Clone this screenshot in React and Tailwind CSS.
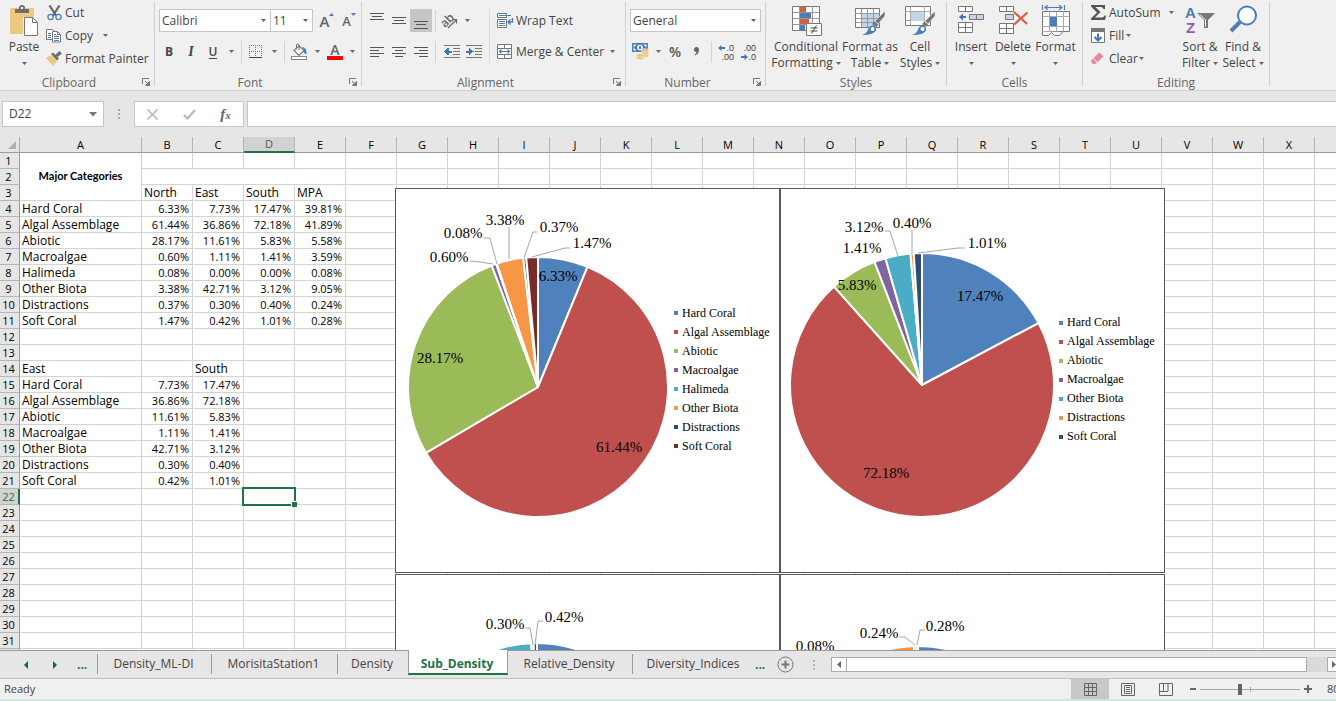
import { useState } from 'react';

const CHART_COLORS = ['#4f81bd', '#c0504d', '#9bbb59', '#8064a2', '#4bacc6', '#f79646', '#2c4d75', '#772c2a'];

const COLUMNS = 'ABCDEFGHIJKLMNOPQRSTUVWXY'.split('');
const ROWS = Array.from({ length: 32 }, (_, i) => i + 1);

const CELLS = {
    3: { B: 'North', C: 'East', D: 'South', E: 'MPA' },
    4: { A: 'Hard Coral', B: '6.33%', C: '7.73%', D: '17.47%', E: '39.81%' },
    5: { A: 'Algal Assemblage', B: '61.44%', C: '36.86%', D: '72.18%', E: '41.89%' },
    6: { A: 'Abiotic', B: '28.17%', C: '11.61%', D: '5.83%', E: '5.58%' },
    7: { A: 'Macroalgae', B: '0.60%', C: '1.11%', D: '1.41%', E: '3.59%' },
    8: { A: 'Halimeda', B: '0.08%', C: '0.00%', D: '0.00%', E: '0.08%' },
    9: { A: 'Other Biota', B: '3.38%', C: '42.71%', D: '3.12%', E: '9.05%' },
    10: { A: 'Distractions', B: '0.37%', C: '0.30%', D: '0.40%', E: '0.24%' },
    11: { A: 'Soft Coral', B: '1.47%', C: '0.42%', D: '1.01%', E: '0.28%' },
    14: { A: 'East', C: 'South' },
    15: { A: 'Hard Coral', B: '7.73%', C: '17.47%' },
    16: { A: 'Algal Assemblage', B: '36.86%', C: '72.18%' },
    17: { A: 'Abiotic', B: '11.61%', C: '5.83%' },
    18: { A: 'Macroalgae', B: '1.11%', C: '1.41%' },
    19: { A: 'Other Biota', B: '42.71%', C: '3.12%' },
    20: { A: 'Distractions', B: '0.30%', C: '0.40%' },
    21: { A: 'Soft Coral', B: '0.42%', C: '1.01%' },
};

const ALL = ['Hard Coral', 'Algal Assemblage', 'Abiotic', 'Macroalgae', 'Halimeda', 'Other Biota', 'Distractions', 'Soft Coral'];
const NO_HALIMEDA = ALL.filter((name) => name !== 'Halimeda');

const CHARTS = [
    {
        title: 'North',
        names: ALL,
        values: [6.33, 61.44, 28.17, 0.6, 0.08, 3.38, 0.37, 1.47],
        cx: 143, cy: 199, r: 130,
        labels: [
            ['6.33%', 163, 93], ['61.44%', 224, 264], ['28.17%', 45, 175], ['0.60%', 54, 74],
            ['0.08%', 68, 50], ['3.38%', 110, 37], ['0.37%', 164, 44], ['1.47%', 197, 60],
        ],
        leaders: ['75,73 85,74 98,76', '89,50 95,50 102,76', '114,39 114,71', '142,44 138,44 129,70', '175,60 170,60 137,69'],
    },
    {
        title: 'South',
        names: NO_HALIMEDA,
        values: [17.47, 72.18, 5.83, 1.41, 3.12, 0.4, 1.01],
        cx: 142, cy: 197, r: 132,
        labels: [
            ['17.47%', 200, 113], ['72.18%', 106, 290], ['5.83%', 77, 102], ['1.41%', 82, 65],
            ['3.12%', 84, 44], ['0.40%', 132, 40], ['1.01%', 207, 60],
        ],
        leaders: ['105,43 110,43 118,68', '132,42 132,66', '185,60 178,60 138,65'],
    },
    {
        title: 'East',
        names: NO_HALIMEDA,
        values: [7.73, 36.86, 11.61, 1.11, 42.71, 0.3, 0.42],
        cx: 142, cy: 195, r: 126,
        labels: [['0.30%', 110, 55], ['0.42%', 169, 48]],
        leaders: ['130,54 135,54 138,71', '148,47 143,47 140,71'],
    },
    {
        title: 'MPA',
        names: ALL,
        values: [39.81, 41.89, 5.58, 3.59, 0.08, 9.05, 0.24, 0.28],
        cx: 138, cy: 198, r: 126,
        labels: [['0.08%', 35, 77], ['0.24%', 99, 64], ['0.28%', 165, 57]],
        leaders: ['120,63 125,63 135,71', '145,56 140,56 137,71'],
    },
];

function slicePath(cx, cy, r, from, to) {
    const a = from * 2 * Math.PI;
    const b = to * 2 * Math.PI;
    const large = to - from > 0.5 ? 1 : 0;
    return `M${cx} ${cy}L${cx + r * Math.sin(a)} ${cy - r * Math.cos(a)}A${r} ${r} 0 ${large} 1 ${cx + r * Math.sin(b)} ${cy - r * Math.cos(b)}Z`;
}

function PieChart({ chart }) {
    const total = chart.values.reduce((sum, v) => sum + v, 0);
    let sum = 0;
    const slices = chart.values.map((v, i) => {
        const from = sum / total;
        sum += v;
        return { d: slicePath(chart.cx, chart.cy, chart.r, from, sum / total), color: CHART_COLORS[i] };
    });

    return (
        <figure className="flex h-[385px] items-center border border-[#595959] bg-white font-['Liberation_Serif',serif] text-black" aria-label={chart.title}>
            <svg viewBox="1 1 278 383" className="h-[383px] w-[278px] shrink-0">
                {slices.map((s, i) => (
                    <path key={i} d={s.d} fill={s.color} stroke="#fff" strokeWidth="2" strokeLinejoin="round" />
                ))}
                {chart.leaders.map((points) => (
                    <polyline key={points} points={points} fill="none" stroke="#a6a6a6" />
                ))}
                {chart.labels.map(([text, x, y]) => (
                    <text key={text} x={x} y={y} fontSize="15" textAnchor="middle">{text}</text>
                ))}
            </svg>
            <ul className="pb-0.5 text-[12px] leading-[19px] whitespace-nowrap">
                {chart.names.map((name, i) => (
                    <li key={name} className="flex items-center gap-1">
                        <svg className="size-1" viewBox="0 0 4 4"><rect width="4" height="4" fill={CHART_COLORS[i]} /></svg>
                        {name}
                    </li>
                ))}
            </ul>
        </figure>
    );
}

/* ---------- small building blocks ---------- */

function Caret() {
    return (
        <svg className="h-[3px] w-[5px] shrink-0" viewBox="0 0 5 3"><path d="M0 0h5L2.5 3z" fill="#666" /></svg>
    );
}

function CaretButton({ label, className = 'w-3.5' }) {
    return (
        <button aria-label={label} className={`flex h-[22px] shrink-0 items-center justify-center ${className}`}><Caret /></button>
    );
}

function IconButton({ label, active, children }) {
    return (
        <button aria-label={label} className={`flex h-[23px] w-[22px] shrink-0 items-center justify-center ${active ? 'bg-[#c6c6c6]' : ''}`}>
            {children}
        </button>
    );
}

function Sep() {
    return <div className="mx-[3px] h-[22px] w-px shrink-0 bg-[#d4d4d4]" />;
}

function Group({ label, launcher, className, children }) {
    return (
        <section className={`flex shrink-0 ${className}`}>
            <div className="flex flex-1 flex-col">
                <div className="flex h-[74px]">{children}</div>
                <div className="flex h-4 items-center pt-px text-[#666]">
                    <span className={`flex-1 text-center ${launcher ? 'pr-1' : ''}`}>{label}</span>
                    {launcher && (
                        <button aria-label={`${label} settings`} className="mr-[3px]">
                            <svg width="9" height="9" viewBox="0 0 9 9" fill="none" stroke="#777">
                                <path d="M.5 6V.5H7M3 3l3 3" />
                                <path d="M7.5 3v4.500H3z" fill="#777" stroke="none" />
                                <path d="M7.500 3.500v4H3.500" />
                            </svg>
                        </button>
                    )}
                </div>
            </div>
            <div className="mt-0.5 h-[84px] w-px bg-[#d0d0d0]" />
        </section>
    );
}

function RowButton({ icon, text, caret, caretGap = 'ml-1' }) {
    return (
        <button className="flex h-[23px] items-center whitespace-nowrap">
            <span className="mr-[3px] flex w-4 justify-center">{icon}</span>
            {text}
            {caret && <span className={caretGap}><Caret /></span>}
        </button>
    );
}

function BigButton({ icon, lines, className }) {
    return (
        <button className={`flex flex-col items-center whitespace-nowrap leading-4 ${className}`}>
            <span className="mt-[5px] flex h-[34px] items-start">{icon}</span>
            <span>{lines[0]}</span>
            <span className="flex h-4 items-center gap-[3px]">{lines[1]}<Caret /></span>
        </button>
    );
}

function Combo({ label, value, className }) {
    return (
        <span className={`relative flex h-[23px] items-center border border-[#c6c6c6] bg-white ${className}`}>
            <select aria-label={label} defaultValue={value} className="h-full w-full appearance-none pl-0.5 text-[12px] text-[#444] outline-none">
                <option>{value}</option>
            </select>
            <span className="pointer-events-none absolute right-1 flex"><Caret /></span>
        </span>
    );
}

/* ---------- icons ---------- */

const PasteIcon = (
    <svg width="30" height="32" viewBox="0 0 30 32">
        <rect x="1" y="3" width="24" height="26" rx="1" fill="#edc87e" />
        <path d="M6 4h4V3a3 3 0 0 1 6 0v1h4v4H6z" fill="#6d6d6d" />
        <rect x="12" y="2" width="2" height="2" fill="#fff" />
        <path d="M14 12h11l5 5v15H14z" fill="#f0f0f0" />
        <path d="M15.500 12.500h8l5 5v13h-13z" fill="#fff" stroke="#777" />
        <path d="M23.500 12.500v5h5" fill="none" stroke="#777" />
    </svg>
);

const CutIcon = (
    <svg width="15" height="16" viewBox="0 0 15 16" fill="none">
        <path d="M2.500 0.500l6.500 10M12.500 0.500L6 10.500" stroke="#666" strokeWidth="2.200" />
        <circle cx="3.500" cy="12" r="2.600" stroke="#4a7ebb" strokeWidth="1.300" />
        <circle cx="11.500" cy="12" r="2.600" stroke="#4a7ebb" strokeWidth="1.300" />
    </svg>
);

const CopyIcon = (
    <svg width="16" height="15" viewBox="0 0 16 15">
        <path d="M.5 1.500h6l2 2v8h-8z" fill="#fff" stroke="#777" />
        <path d="M2 5.500h3M2 7.500h3M2 9.500h3" stroke="#4a7ebb" />
        <path d="M6.500 3.500h5l3 3v7.500h-8z" fill="#fff" stroke="#777" />
        <path d="M11.500 3.500v3h3" fill="none" stroke="#777" />
        <path d="M8 8.500h5M8 10.500h5M8 12.500h5M8 6.500h2" stroke="#4a7ebb" />
    </svg>
);

const PainterIcon = (
    <svg width="16" height="15" viewBox="0 0 16 15">
        <path d="M0 7l5-3 6 6-4 5z" fill="#edc87e" />
        <path d="M5 3l2-1.500 6 6-2 2z" fill="#6d6d6d" />
        <path d="M9 4l4.500-4L16 2.500 11.500 6z" fill="#6d6d6d" />
    </svg>
);

const BordersIcon = (
    <svg width="14" height="14" viewBox="0 0 14 14" stroke="#777" strokeDasharray="1 1" shapeRendering="crispEdges">
        <path d="M0 .5h13M0 6.500h13M.5 0v13M6.500 0v13M12.500 0v13" fill="none" />
        <path d="M0 12.500h13" stroke="#444" strokeDasharray="none" />
    </svg>
);

const FillColorIcon = (
    <svg width="17" height="17" viewBox="0 0 17 17">
        <path d="M3 7.500L8 3l5 4.500-5 5z" fill="#fff" stroke="#777" strokeWidth="1.200" />
        <path d="M5.500 5V1.500Q7 .2 8 1.500V7" fill="none" stroke="#777" />
        <path d="M11 4q5 0 4.500 7.500L12.500 9.500q1-3-1.500-5.500z" fill="#4a7ebb" />
        <rect x=".5" y="13.500" width="15" height="3" fill="#fff" stroke="#888" />
    </svg>
);

function AlignIcon({ lines, width = 14, height = 14 }) {
    return (
        <svg width={width} height={height} viewBox={`0 0 ${width} ${height}`} shapeRendering="crispEdges">
            {lines.map(([x, y, w]) => <rect key={y} x={x} y={y} width={w} height="1" fill="#555" />)}
        </svg>
    );
}

const OrientationIcon = (
    <svg width="18" height="16" viewBox="0 0 18 16" className="overflow-visible">
        <text x="0" y="12" fontSize="12" fontWeight="600" fill="#666" transform="rotate(-45 6 9)">ab</text>
        <path d="M7 15l8-8M11.500 6.500H15.500V10.500" stroke="#666" fill="none" strokeWidth="1.200" />
    </svg>
);

function IndentIcon({ right }) {
    return (
        <svg width="16" height="14" viewBox="0 0 16 14" shapeRendering="crispEdges">
            <path d="M0 .5h16M9 3.500h7M9 6.500h7M9 9.500h7M0 12.500h16" stroke="#777" />
            {right
                ? <path d="M0 5.500h3v-3l4.500 4-4.500 4v-3H0z" fill="#3f76b5" />
                : <path d="M7.500 5.500h-3v-3L0 6.500l4.500 4v-3h3z" fill="#3f76b5" />}
        </svg>
    );
}

const WrapIcon = (
    <svg width="17" height="16" viewBox="0 0 17 16" className="shrink-0">
        <path d="M.5.5h9v4h-9z M.5 6.500h9v8h-9z" fill="#fff" stroke="#777" />
        <path d="M2 2.500h12M2 8.500h6M2 10.500h6M2 12.500h6" stroke="#4a7ebb" />
        <path d="M15.500 5v4h-4M13.500 6.500L11 9l2.500 2.500" fill="none" stroke="#4a7ebb" strokeWidth="1.400" />
    </svg>
);

const MergeIcon = (
    <svg width="16" height="16" viewBox="0 0 16 16" fill="none">
        <path d="M.5.5h14v14H.5zM.5 4.500h14M.5 10.500h14M7.500 .5v4M7.500 10.500v4" stroke="#777" fill="#fff" />
        <path d="M2 7.500h11M4.500 5.500L2.500 7.500l2 2M10.500 5.500l2 2-2 2" stroke="#4a7ebb" strokeWidth="1.200" />
    </svg>
);

const CurrencyIcon = (
    <svg width="18" height="17" viewBox="0 0 18 17">
        <rect x="0" y="0" width="16" height="9" fill="#4a7ebb" />
        <path d="M1.500 1.500h3l-3 3zM14.500 1.500h-3l3 3zM1.500 7.500h3l-3-3z" fill="#fff" />
        <circle cx="8" cy="4.500" r="2.800" fill="#fff" />
        <path d="M7 3h2v3H7z" fill="#4a7ebb" />
        <g fill="#edc07a" stroke="#f0f0f0" strokeWidth=".6">
            <ellipse cx="13" cy="12.500" rx="3.800" ry="1.800" />
            <ellipse cx="13" cy="10" rx="3.800" ry="1.800" />
            <ellipse cx="13" cy="7.500" rx="3.800" ry="1.800" />
            <ellipse cx="8" cy="15" rx="3.800" ry="1.800" />
            <ellipse cx="8" cy="12.500" rx="3.800" ry="1.800" />
        </g>
    </svg>
);

function DecimalIcon({ increase }) {
    return (
        <svg width="18" height="18" viewBox="0 0 18 18" fontSize="9" fill="#444" className="shrink-0 overflow-visible font-['Liberation_Sans',sans-serif]">
            <text x="17" y="8" textAnchor="end">{increase ? '.0' : '.00'}</text>
            <text x="17" y="17" textAnchor="end">{increase ? '.00' : '.0'}</text>
            {increase
                ? <path d="M1 5L4.500 2v2H8v2H4.500v2z" fill="#3f76b5" />
                : <path d="M9 14L5.500 11v2H2v2h3.500v2z" fill="#3f76b5" />}
        </svg>
    );
}

const ConditionalIcon = (
    <svg width="31" height="31" viewBox="0 0 31 31">
        <path d="M1.500 1.500h27v24h-27z" fill="#fff" stroke="#777" />
        <path d="M1.500 7.500h27M1.500 13.500h27M1.500 19.500h27M8.500 1.500v24M21.500 1.500v24" stroke="#999" />
        <path d="M9 2h6v5H9zM9 14h9v5H9z" fill="#d65f3d" />
        <path d="M9 8h11v5H9zM9 20h5v5H9z" fill="#4a7ebb" />
        <path d="M15.500 18.500h15v12h-15z" fill="#fff" stroke="#777" />
        <path d="M19.500 23h7M19.500 26h7M25.500 20.500l-5 8" stroke="#444" fill="none" />
    </svg>
);

const Brush = (
    <>
        <path d="M31 6v5l-7 8-3-3z" fill="#777" stroke="#f0f0f0" strokeWidth=".6" />
        <path d="M20.500 16.500l3.500 3-2 2.500-4-3z" fill="#777" />
        <path d="M8 30q5-2 6-5.500 1-4 5-4 3.500 1 3 4.500-1 5-14 5z" fill="#4a7ebb" />
        <circle cx="18.500" cy="24" r="2" fill="#fff" />
    </>
);

const TableStyleIcon = (
    <svg width="32" height="31" viewBox="0 0 32 31">
        <path d="M1.500 3.500h24v19h-24z" fill="#fff" stroke="#777" />
        <path d="M8 9h17v13H8z" fill="#c3d5ea" />
        <path d="M1.500 8.500h24M1.500 13.500h24M1.500 17.500h24M7.500 3.500v19M13.500 3.500v19M19.500 3.500v19" stroke="#999" />
        {Brush}
    </svg>
);

const CellStyleIcon = (
    <svg width="32" height="31" viewBox="0 0 32 31">
        <path d="M1.500 1.500h25v19h-25z" fill="#fff" stroke="#777" />
        <path d="M1.500 6.500h25M1.500 15.500h25M6.500 1.500v19M20.500 1.500v19" stroke="#aaa" />
        <path d="M7 7h13v9H7z" fill="#c3d5ea" />
        {Brush}
    </svg>
);

const InsertIcon = (
    <svg width="28" height="30" viewBox="0 0 28 30" stroke="#777">
        <path d="M1.500 1.500h14v5h-14zM8.500 1.500v5M1.500 17.500h14v10h-14zM1.500 22.500h14M8.500 17.500v10" fill="#fff" />
        <path d="M12.500 9.500h14v5h-14zM19.500 9.500v5" fill="#c3d5ea" />
        <path d="M2 12L6 8.500v2.500h3v2H6v2.500z" fill="#3f76b5" stroke="none" />
    </svg>
);

const DeleteIcon = (
    <svg width="31" height="30" viewBox="0 0 31 30" stroke="#777">
        <path d="M1.500 1.500h14v5h-14zM8.500 1.500v5M1.500 18.500h14v10h-14zM1.500 23.500h14M8.500 18.500v10" fill="#fff" />
        <path d="M7.500 9.500h8v5h-8z" fill="#c3d5ea" />
        <path d="M16 7l13 12M29.500 7.500L16 19.500" stroke="#d65f3d" strokeWidth="2.200" />
    </svg>
);

const FormatIcon = (
    <svg width="29" height="31" viewBox="0 0 29 31" fill="none">
        <path d="M1.500 0v5M23.500 0v5M4 2.500h17M7 0L4 2.500 7 5M18 0l3 2.500L18 5" stroke="#4a7ebb" strokeWidth="1.200" />
        <path d="M1.500 6.500h27v20h-27z" fill="#fff" stroke="#777" />
        <path d="M1.500 11.500h27M1.500 21.500h27M8.500 6.500v20M15.500 6.500v20M22.500 6.500v20" stroke="#aaa" />
        <path d="M9 12h7v9H9z" fill="#4a7ebb" />
        <path d="M1.500 26.500v4h6l3-3 3 3h5l3-3.500" fill="#fff" stroke="#777" />
    </svg>
);

const SumIcon = (
    <svg width="15" height="15" viewBox="0 0 15 15"><path d="M0 0h14v4h-1.500Q12 2 10 2H4.500l5 5-5.500 5.500h7q2 0 2.500-2H15L14 15H0v-1.500L6 7.500 0 1.500z" fill="#555" /></svg>
);

const FillIcon = (
    <svg width="15" height="16" viewBox="0 0 15 16">
        <path d="M.5.5h13v14H.5z" fill="#fff" stroke="#777" />
        <path d="M0 0h14v4H0z" fill="#777" />
        <path d="M7 5.500v7M3.500 9L7 12.500 10.500 9" stroke="#3f76b5" strokeWidth="2" fill="none" />
    </svg>
);

const ClearIcon = (
    <svg width="14" height="13" viewBox="0 0 14 13">
        <path d="M8.500 0.500l4 4-6 5.500-4-4z" fill="#e8879b" />
        <path d="M1.800 6.600l4 4-1.500 1.500H2L.3 10.300V8.200z" fill="#e8879b" />
    </svg>
);

const SortIcon = (
    <svg width="30" height="29" viewBox="0 0 30 29" fontWeight="700" fontSize="15" className="overflow-visible font-['Liberation_Sans',sans-serif]">
        <text x="0" y="13" fill="#4a7ebb">A</text>
        <text x="1" y="28" fill="#9059b5">Z</text>
        <path d="M12 8h18l-7 7v8h-4v-8z" fill="#777" />
        <path d="M15 9.500l5.500 5.500v6.500" fill="none" stroke="#fff" />
    </svg>
);

const FindIcon = (
    <svg width="29" height="29" viewBox="0 0 29 29">
        <circle cx="18" cy="10.500" r="9" fill="#fff" stroke="#4a7ebb" strokeWidth="2" />
        <path d="M11 17l-9 9" stroke="#4a7ebb" strokeWidth="4" />
    </svg>
);

/* ---------- ribbon ---------- */

function Ribbon() {
    return (
        <header className="flex h-[91px] shrink-0 overflow-hidden border-b border-[#d2d2d2] bg-[#f0f0f0]">
            <Group label="Clipboard" launcher className="w-[155px]">
                <BigButton icon={PasteIcon} lines={['Paste', '']} className="w-[46px] pl-0.5" />
                <div className="flex flex-col items-start pt-px">
                    <RowButton icon={CutIcon} text="Cut" />
                    <RowButton icon={CopyIcon} text="Copy" caret caretGap="ml-2.5" />
                    <RowButton icon={PainterIcon} text="Format Painter" />
                </div>
            </Group>

            <Group label="Font" launcher className="w-[207px]">
                <div className="flex flex-col gap-2 pt-[9px] pl-[3px]">
                    <div className="flex items-center">
                        <Combo label="Font name" value="Calibri" className="ml-px w-28" />
                        <Combo label="Font size" value="11" className="-ml-px w-[43px]" />
                        <IconButton label="Increase font size">
                            <span className="pl-1.5 text-[15px] leading-4 font-semibold text-[#666]">A</span>
                            <svg width="5" height="3" viewBox="0 0 5 3" className="mb-3"><path d="M0 3h5L2.500 0z" fill="#4a7ebb" /></svg>
                        </IconButton>
                        <IconButton label="Decrease font size">
                            <span className="pl-1.5 text-[13px] leading-4 font-semibold text-[#666]">A</span>
                            <svg width="5" height="3" viewBox="0 0 5 3" className="mb-3"><path d="M0 0h5L2.500 3z" fill="#4a7ebb" /></svg>
                        </IconButton>
                    </div>
                    <div className="flex items-center">
                        <IconButton label="Bold"><b className="text-[12px]">B</b></IconButton>
                        <IconButton label="Italic"><i className="font-['Liberation_Serif',serif] text-[14px] font-bold">I</i></IconButton>
                        <IconButton label="Underline"><span className="border-b border-[#444] text-[12px] leading-[13px] font-semibold">U</span></IconButton>
                        <CaretButton label="Underline styles" />
                        <Sep />
                        <IconButton label="Borders">{BordersIcon}</IconButton>
                        <CaretButton label="More borders" />
                        <Sep />
                        <IconButton label="Fill color">{FillColorIcon}</IconButton>
                        <CaretButton label="More fill colors" />
                        <IconButton label="Font color">
                            <span className="w-4 border-b-4 border-[#ff0000] text-center text-[14px] leading-[12px] font-semibold text-[#666]">A</span>
                        </IconButton>
                        <CaretButton label="More font colors" className="w-3" />
                    </div>
                </div>
            </Group>

            <Group label="Alignment" launcher className="w-[264px]">
                <div className="flex w-[127px] flex-col gap-2 pt-[9px] pl-1">
                    <div className="flex items-center">
                        <IconButton label="Top align"><AlignIcon lines={[[0, 0, 14], [2, 3, 10], [0, 6, 14]]} height={16} /></IconButton>
                        <IconButton label="Middle align"><AlignIcon lines={[[0, 4, 14], [2, 7, 10], [0, 10, 14]]} height={16} /></IconButton>
                        <IconButton label="Bottom align" active><AlignIcon lines={[[0, 8, 14], [2, 11, 10], [0, 15, 14]]} height={16} /></IconButton>
                        <Sep />
                        <IconButton label="Orientation">{OrientationIcon}</IconButton>
                        <CaretButton label="More orientations" className="w-3" />
                    </div>
                    <div className="flex items-center">
                        <IconButton label="Align left"><AlignIcon lines={[[0, 1, 14], [0, 4, 9], [0, 7, 14], [0, 10, 9]]} height={12} /></IconButton>
                        <IconButton label="Center"><AlignIcon lines={[[0, 1, 14], [3, 4, 8], [0, 7, 14], [3, 10, 8]]} height={12} /></IconButton>
                        <IconButton label="Align right"><AlignIcon lines={[[0, 1, 14], [5, 4, 9], [0, 7, 14], [5, 10, 9]]} height={12} /></IconButton>
                        <Sep />
                        <div className="flex pl-0.5">
                            <IconButton label="Decrease indent"><IndentIcon /></IconButton>
                            <IconButton label="Increase indent"><IndentIcon right /></IconButton>
                        </div>
                    </div>
                </div>
                <div className="mt-[9px] h-[54px] w-px bg-[#dcdcdc]" />
                <div className="flex flex-col items-start gap-2 pt-[9px] pl-[7px]">
                    <RowButton icon={WrapIcon} text="Wrap Text" />
                    <RowButton icon={MergeIcon} text="Merge & Center" caret caretGap="ml-1.5" />
                </div>
            </Group>

            <Group label="Number" launcher className="w-[140px]">
                <div className="flex flex-1 flex-col gap-2 pt-[9px] pr-1 pl-1">
                    <Combo label="Number format" value="General" className="w-full" />
                    <div className="flex items-center">
                        <IconButton label="Accounting format">{CurrencyIcon}</IconButton>
                        <CaretButton label="More currencies" className="w-3" />
                        <IconButton label="Percent style"><span className="text-[14px] font-semibold text-[#555]">%</span></IconButton>
                        <IconButton label="Comma style">
                            <svg width="6" height="9" viewBox="0 0 6 9"><path d="M0 2.500a2.500 2.500 0 0 1 5 0Q5 7 1 8.500L.5 7.500Q2.500 6.500 2.500 5 0 5 0 2.500z" fill="#666" /></svg>
                        </IconButton>
                        <Sep />
                        <IconButton label="Increase decimal"><DecimalIcon increase /></IconButton>
                        <IconButton label="Decrease decimal"><DecimalIcon /></IconButton>
                    </div>
                </div>
            </Group>

            <Group label="Styles" className="w-[181px]">
                <BigButton icon={ConditionalIcon} lines={['Conditional', 'Formatting']} className="ml-1 w-[72px]" />
                <BigButton icon={TableStyleIcon} lines={['Format as', 'Table']} className="w-14" />
                <BigButton icon={CellStyleIcon} lines={['Cell', 'Styles']} className="w-11" />
            </Group>

            <Group label="Cells" className="w-[136px]">
                <BigButton icon={InsertIcon} lines={['Insert', '']} className="ml-[3px] w-[42px]" />
                <BigButton icon={DeleteIcon} lines={['Delete', '']} className="w-[42px]" />
                <BigButton icon={FormatIcon} lines={['Format', '']} className="w-[43px]" />
            </Group>

            <Group label="Editing" className="w-[187px]">
                <div className="flex w-[94px] flex-col items-start pt-px pl-[7px]">
                    <RowButton icon={SumIcon} text="AutoSum" caret caretGap="ml-2" />
                    <RowButton icon={FillIcon} text="Fill" caret caretGap="ml-0.5" />
                    <RowButton icon={ClearIcon} text="Clear" caret caretGap="ml-px" />
                </div>
                <BigButton icon={SortIcon} lines={['Sort &', 'Filter']} className="w-[46px]" />
                <BigButton icon={FindIcon} lines={['Find &', 'Select']} className="w-[40px]" />
            </Group>
        </header>
    );
}

function FormulaBar() {
    return (
        <div className="flex h-[46px] shrink-0 items-center bg-[#e6e6e6] pl-0.5">
            <div className="flex h-[26px] w-[102px] shrink-0 items-center border border-[#c6c6c6] bg-white">
                <input aria-label="Name box" defaultValue="D22" className="w-0 flex-1 pl-1.5 text-[12px] outline-none" />
                <button aria-label="Open name list" className="pr-1.5">
                    <svg width="8" height="5" viewBox="0 0 8 5"><path d="M0 0h8L4 4.500z" fill="#777" /></svg>
                </button>
            </div>
            <svg className="mx-[14px] shrink-0" width="2" height="10" viewBox="0 0 2 10"><path d="M0 0h2v2H0zM0 4h2v2H0zM0 8h2v2H0z" fill="#aaa" /></svg>
            <div className="flex h-[26px] w-[110px] shrink-0 items-center justify-around border border-[#c6c6c6] bg-white">
                <button aria-label="Cancel">
                    <svg width="11" height="11" viewBox="0 0 11 11"><path d="M.5.5l10 10M10.500.5l-10 10" stroke="#bcbcbc" strokeWidth="1.600" /></svg>
                </button>
                <button aria-label="Enter">
                    <svg width="13" height="11" viewBox="0 0 13 11"><path d="M1 6l3.500 3.500L12 1" stroke="#bcbcbc" strokeWidth="2.400" fill="none" /></svg>
                </button>
                <button aria-label="Insert function" className="font-['Liberation_Serif',serif] text-[15px] leading-none font-bold text-[#666] italic">
                    f<span className="text-[11px]">x</span>
                </button>
            </div>
            <input aria-label="Formula bar" className="ml-[3px] h-[26px] flex-1 border border-r-0 border-[#c6c6c6] bg-white px-2 outline-none" />
        </div>
    );
}

/* ---------- sheet ---------- */

function Cell({ row, col, selected }) {
    const value = CELLS[row]?.[col];
    const isNumber = value?.endsWith('%');

    return (
        <td className={`border-r border-b border-[#d4d4d4] bg-white pt-px ${isNumber ? 'pr-[3px] text-right text-[11px]' : 'pl-0.5'} ${selected ? 'relative' : ''}`}>
            {value}
            {selected && (
                <span className="absolute -inset-[2px] z-10 border-2 border-[#217346]">
                    <span className="absolute -right-[3px] -bottom-[3px] size-[6px] border-t border-l border-white bg-[#217346]" />
                </span>
            )}
        </td>
    );
}

function Sheet() {
    const activeCol = 'D';
    const activeRow = 22;

    return (
        <main className="relative min-h-0 flex-1 overflow-hidden bg-[#e6e6e6]">
            <table className="w-[1366px] table-fixed border-separate border-spacing-0 text-[12px] leading-[14px] whitespace-nowrap text-black">
                <colgroup>
                    <col className="w-5" />
                    {COLUMNS.map((col) => <col key={col} className={col === 'A' ? 'w-[122px]' : 'w-[51px]'} />)}
                </colgroup>
                <thead>
                    <tr className="h-4">
                        <th className="border-r border-b border-r-[#ababab] border-b-[#9b9b9b] p-0">
                            <svg className="ml-2" width="8" height="8" viewBox="0 0 8 8"><path d="M8 0v8H0z" fill="#b1b1b1" /></svg>
                        </th>
                        {COLUMNS.map((col) => (
                            <th
                                key={col}
                                scope="col"
                                className={`border-r border-r-[#b5b5b5] p-0 text-[11px] font-normal ${col === activeCol ? 'border-b-2 border-b-[#217346] bg-[#d2d2d2] text-[#217346]' : 'border-b border-b-[#9b9b9b]'}`}
                            >
                                {col}
                            </th>
                        ))}
                    </tr>
                </thead>
                <tbody>
                    {ROWS.map((row) => (
                        <tr key={row} className="h-4">
                            <th
                                scope="row"
                                className={`border-b border-b-[#b5b5b5] pt-px pb-0 pl-0 text-[11px] font-normal ${row === activeRow ? 'border-r-2 border-r-[#217346] bg-[#d2d2d2] pr-px text-[#217346]' : 'border-r border-r-[#9b9b9b] pr-0.5'}`}
                            >
                                {row}
                            </th>
                            {COLUMNS.map((col) => {
                                // A1:A3 and B2:E2 are merged
                                if (col === 'A' && row === 1) {
                                    return (
                                        <td key={col} rowSpan={3} className="border-r border-b border-[#d4d4d4] bg-white pb-0.5 text-center font-['Lato',sans-serif] text-[11px] font-bold">
                                            Major Categories
                                        </td>
                                    );
                                }
                                if (col === 'A' && row < 4) return null;
                                if (row === 2 && col === 'B') {
                                    return <td key={col} colSpan={4} className="border-r border-b border-[#d4d4d4] bg-white" />;
                                }
                                if (row === 2 && 'CDE'.includes(col)) return null;
                                return <Cell key={col} row={row} col={col} selected={row === activeRow && col === activeCol} />;
                            })}
                        </tr>
                    ))}
                </tbody>
            </table>

            {/* charts float over the cells */}
            <div className="absolute top-[51px] left-[395px] grid grid-cols-[385px_385px] gap-y-px">
                {CHARTS.map((chart) => <PieChart key={chart.title} chart={chart} />)}
            </div>
        </main>
    );
}

/* ---------- bottom bars ---------- */

const TABS = [
    { name: 'Density_ML-DI', width: 'w-[114px]' },
    { name: 'MorisitaStation1', width: 'w-[126px]' },
    { name: 'Density', width: 'w-[71px]' },
    { name: 'Sub_Density', width: 'w-[100px]' },
    { name: 'Relative_Density', width: 'w-[124px]' },
    { name: 'Diversity_Indices', width: 'w-[123px]' },
];

function SheetTabs() {
    const [active, setActive] = useState('Sub_Density');
    const activeIndex = TABS.findIndex((tab) => tab.name === active);

    return (
        <nav className="flex h-7 shrink-0 overflow-hidden bg-[#e6e6e6] text-[12px]">
            <div className="flex w-[97px] shrink-0 items-center border-t border-[#9b9b9b] pl-6">
                <button aria-label="Previous sheet"><svg width="4" height="8" viewBox="0 0 4 8"><path d="M4 0v8L0 4z" fill="#0b6a3a" /></svg></button>
                <button aria-label="Next sheet" className="ml-[25px]"><svg width="4" height="8" viewBox="0 0 4 8"><path d="M0 0v8L4 4z" fill="#0b6a3a" /></svg></button>
                <button aria-label="More sheets before" className="ml-5 font-bold text-[#217346]">...</button>
            </div>
            {TABS.map((tab, i) => (
                <div key={tab.name} className={`flex shrink-0 ${tab.width} ${i === activeIndex ? '' : 'border-t border-[#9b9b9b]'}`}>
                    {i !== activeIndex && i !== activeIndex + 1 && <div className="mt-[3px] h-5 w-px bg-[#9b9b9b]" />}
                    <button
                        onClick={() => setActive(tab.name)}
                        className={i === activeIndex
                            ? 'h-[25px] flex-1 border-x border-b-2 border-x-[#9b9b9b] border-b-[#217346] bg-white pt-1 pr-0.5 font-bold text-[#217346]'
                            : 'h-[26px] flex-1 pr-0.5 text-[#444]'}
                    >
                        {tab.name}
                    </button>
                </div>
            ))}
            <div className="flex flex-1 items-center border-t border-[#9b9b9b]">
                <button aria-label="More sheets after" className="font-bold text-[#217346]">...</button>
                <button aria-label="New sheet" className="ml-3">
                    <svg width="17" height="17" viewBox="0 0 17 17" fill="none" stroke="#777"><circle cx="8.500" cy="8.500" r="7.500" /><path d="M4.500 8.500h8M8.500 4.500v8" strokeWidth="2" /></svg>
                </button>
                <svg className="mr-4 ml-[19px] shrink-0" width="2" height="10" viewBox="0 0 2 10"><path d="M0 0h2v2H0zM0 4h2v2H0zM0 8h2v2H0z" fill="#b5b5b5" /></svg>
                <div className="flex h-[15px] flex-1 bg-[#dadada]">
                    <button aria-label="Scroll left" className="flex w-4 items-center justify-center border border-[#ababab] bg-white">
                        <svg width="4" height="7" viewBox="0 0 4 7"><path d="M4 0v7L0 3.500z" fill="#666" /></svg>
                    </button>
                    <div className="-ml-px mr-5 flex-1 border border-[#ababab] bg-white" />
                    <button aria-label="Scroll right" className="flex w-[9px] items-center justify-end border border-r-0 border-[#ababab] bg-white">
                        <svg width="4" height="7" viewBox="0 0 4 7"><path d="M0 0v7L4 3.500z" fill="#666" /></svg>
                    </button>
                </div>
            </div>
        </nav>
    );
}

function StatusBar() {
    return (
        <footer className="flex h-[23px] shrink-0 items-stretch overflow-hidden border-t border-b-2 border-t-[#c0c0c0] border-b-[#d0e8dc] bg-[#f0f0f0] pl-1 text-[11px] text-[#444]">
            <span className="flex flex-1 items-center">Ready</span>
            <button aria-label="Normal view" className="flex w-[38px] items-center justify-center bg-[#c8c8c8]">
                <svg width="13" height="13" viewBox="0 0 13 13" fill="none" stroke="#666"><path d="M.5.5h12v12H.5zM.5 4.500h12M.5 8.500h12M4.500.5v12M8.500.5v12" /></svg>
            </button>
            <button aria-label="Page layout" className="flex w-[38px] items-center justify-center">
                <svg width="14" height="13" viewBox="0 0 14 13" fill="none" stroke="#666"><path d="M.5.5h13v12H.5zM3.500 2.500h7v8h-7zM5 4.500h4M5 6.500h4M5 8.500h4" /></svg>
            </button>
            <button aria-label="Page break preview" className="flex w-[38px] items-center justify-center">
                <svg width="14" height="13" viewBox="0 0 14 13" fill="none" stroke="#666"><path d="M.5.5h13v12H.5zM.5 8.500h8.500v-8M4.500.5v8" /></svg>
            </button>
            <button aria-label="Zoom out" className="ml-[5px]">
                <svg width="6" height="2" viewBox="0 0 6 2"><path d="M0 0h6v2H0z" fill="#666" /></svg>
            </button>
            <div className="relative ml-1 flex w-[100px] items-center">
                <div className="absolute left-[50px] h-[5px] w-px bg-[#a6a6a6]" />
                <input
                    type="range"
                    aria-label="Zoom"
                    min="0"
                    max="100"
                    defaultValue="40"
                    className="relative h-3 w-full appearance-none bg-transparent [&::-webkit-slider-runnable-track]:h-px [&::-webkit-slider-runnable-track]:bg-[#a6a6a6] [&::-webkit-slider-thumb]:-mt-[5px] [&::-webkit-slider-thumb]:h-[11px] [&::-webkit-slider-thumb]:w-1 [&::-webkit-slider-thumb]:appearance-none [&::-webkit-slider-thumb]:bg-[#666]"
                />
            </div>
            <button aria-label="Zoom in" className="ml-1">
                <svg width="8" height="8" viewBox="0 0 8 8"><path d="M3 0h2v3h3v2H5v3H3V5H0V3h3z" fill="#666" /></svg>
            </button>
            <button aria-label="Zoom level" className="ml-[15px] w-[9px] overflow-hidden text-left">80%</button>
        </footer>
    );
}

export default function App() {
    return (
        <div className="flex h-screen flex-col overflow-hidden bg-[#f0f0f0] font-['Open_Sans',sans-serif] text-[12px] leading-4 text-[#444]">
            <Ribbon />
            <FormulaBar />
            <Sheet />
            <SheetTabs />
            <StatusBar />
        </div>
    );
}
